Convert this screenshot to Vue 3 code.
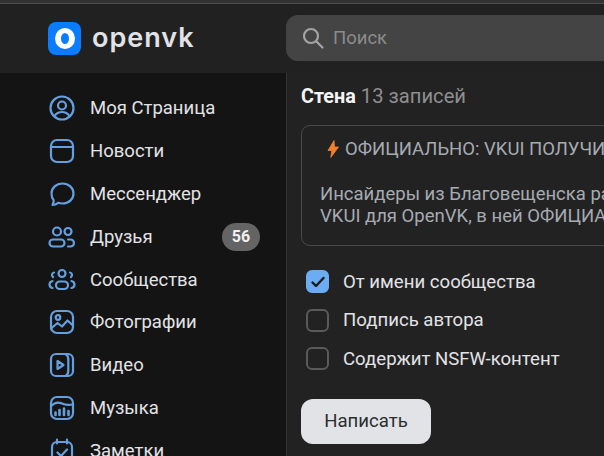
<script setup>
const navItems = [
  { label: 'Моя Страница', icon: 'user' },
  { label: 'Новости', icon: 'news' },
  { label: 'Мессенджер', icon: 'chat' },
  { label: 'Друзья', icon: 'friends', badge: 56 },
  { label: 'Сообщества', icon: 'groups' },
  { label: 'Фотографии', icon: 'photo' },
  { label: 'Видео', icon: 'video' },
  { label: 'Музыка', icon: 'music' },
  { label: 'Заметки', icon: 'notes' }
]

const options = [
  { label: 'От имени сообщества', checked: true },
  { label: 'Подпись автора', checked: false },
  { label: 'Содержит NSFW-контент', checked: false }
]
</script>

<template>
  <div class="page">
    <header class="header">
      <div class="brand">
        <div class="logo"><span class="logo-o"></span></div>
        <span class="brand-name">openvk</span>
      </div>
      <div class="search">
        <svg class="search-icon" width="24" height="24" viewBox="0 0 24 24" fill="none" stroke="#a4a4a4" stroke-width="2.2" stroke-linecap="round">
          <circle cx="10" cy="10" r="7" />
          <path d="M15.5 15.5 21.5 21.5" />
        </svg>
        <span>Поиск</span>
      </div>
    </header>

    <div class="body">
      <nav class="sidebar">
        <a v-for="item in navItems" :key="item.label" class="nav-item">
          <svg class="nav-icon" width="28" height="28" viewBox="0 0 28 28" fill="none" stroke="#649fe0" stroke-width="2.2" stroke-linecap="round" stroke-linejoin="round">
            <template v-if="item.icon === 'user'">
              <circle cx="14" cy="14" r="11.5" />
              <circle cx="14" cy="11.5" r="4" />
              <path d="M6.5 22c2-3 4.500-4 7.500-4s5.500 1 7.500 4" />
            </template>
            <template v-else-if="item.icon === 'news'">
              <rect x="3" y="3" width="22" height="22" rx="6" />
              <path d="M3 10h22" />
            </template>
            <template v-else-if="item.icon === 'chat'">
              <path d="M14.500 3.500c6.200 0 11 4.300 11 10s-4.800 10-11 10c-1.500 0-3-.2-4.300-.7-1.500 1.300-3.700 2.200-5.700 2.200.9-1.500 1.300-3 1.200-4.700C4 18.500 3.500 16.200 3.500 13.500c0-5.700 4.800-10 11-10Z" />
            </template>
            <template v-else-if="item.icon === 'friends'">
              <circle cx="9" cy="8.500" r="4" />
              <circle cx="20" cy="8.500" r="3.500" />
              <rect x="1.500" y="16.500" width="15" height="7" rx="3.500" />
              <path d="M20 16.500h2.500a3.500 3.500 0 0 1 0 7H20" />
            </template>
            <template v-else-if="item.icon === 'groups'">
              <circle cx="14" cy="7.500" r="3.500" />
              <rect x="8" y="15.500" width="12" height="7.500" rx="3.750" />
              <path d="M6 6.500a2.500 2.500 0 0 0-1 4.500M22 6.500a2.500 2.500 0 0 1 1 4.500M4.500 15c-2 .5-3 2-3 3.500s1 3 3 3.500M23.500 15c2 .5 3 2 3 3.500s-1 3-3 3.500" />
            </template>
            <template v-else-if="item.icon === 'photo'">
              <rect x="3" y="3" width="22" height="22" rx="6" />
              <circle cx="10" cy="9.500" r="2.300" />
              <path d="M3 20.500 9.500 15l4.500 3.500 5.500-6 5.500 5" />
            </template>
            <template v-else-if="item.icon === 'video'">
              <rect x="3" y="3" width="22" height="22" rx="5" />
              <path d="M18 3.500c1.800 1 2.300 2.500 2.300 5v11c0 2.500-.5 4-2.300 5" />
              <path d="M9.500 10v8l6-4Z" />
            </template>
            <template v-else-if="item.icon === 'music'">
              <rect x="3" y="3" width="22" height="22" rx="6" />
              <path d="M3 12c3.500-3.500 7-4.500 11-2.500s7.500 1.500 11 1" />
              <path d="M7.500 18.500v2.500M11.500 16v5M16 14.500V21M20.500 17v4" stroke-width="2.600" />
            </template>
            <template v-else>
              <rect x="4" y="5" width="20" height="20" rx="5" />
              <path d="M9 2.500v4M19 2.500v4M9.500 15.500l3.500 3.500 6-6.500" />
            </template>
          </svg>
          <span class="nav-label">{{ item.label }}</span>
          <span v-if="item.badge" class="badge">{{ item.badge }}</span>
        </a>
      </nav>

      <main class="main">
        <div class="wall-title"><b>Стена</b> <span>13 записей</span></div>

        <div class="post">
          <div class="post-title">
            <svg class="bolt" width="14" height="20" viewBox="0 0 14 20"><path d="M8 1.500 2 11.500h3.800L4.800 18.500 12.500 8H8.500Z" fill="#f0802c" stroke="#f0802c" stroke-width="0.800" stroke-linejoin="round" /></svg>
            <span>ОФИЦИАЛЬНО: VKUI ПОЛУЧИЛ ТЁМНУЮ</span>
          </div>
          <p class="post-text">Инсайдеры из Благовещенска рассказали<br>VKUI для OpenVK, в ней ОФИЦИАЛЬНО</p>
        </div>

        <label v-for="opt in options" :key="opt.label" class="option">
          <span class="box" :class="{ checked: opt.checked }">
            <svg v-if="opt.checked" width="16" height="14" viewBox="0 0 16 14" fill="none" stroke="#1b1b1b" stroke-width="2.400" stroke-linecap="round" stroke-linejoin="round"><path d="M2.500 7.500 6 11l7.500-8" /></svg>
          </span>
          <span>{{ opt.label }}</span>
        </label>

        <button class="submit">Написать</button>
      </main>
    </div>
  </div>
</template>

<style>
html, body {
  margin: 0;
  background: #222;
  overflow: hidden;
}
</style>

<style scoped>
.page {
  width: 604px;
  height: 456px;
  overflow: hidden;
  display: flex;
  flex-direction: column;
  font-family: Roboto, "Noto Sans", sans-serif;
  background: #222;
  border-top: 3px solid #333;
  box-sizing: border-box;
}

.header {
  height: 70px;
  flex-shrink: 0;
  display: flex;
  align-items: center;
  padding-bottom: 1px;
  background: #212121;
  border-top: 1px solid #4c4c4c;
  box-sizing: border-box;
}

.brand {
  width: 286px;
  flex-shrink: 0;
  padding-left: 48px;
  box-sizing: border-box;
  display: flex;
  align-items: center;
  gap: 11px;
}

.logo {
  width: 33px;
  height: 33px;
  border-radius: 8px;
  background: #0a7cff;
  display: flex;
  align-items: center;
  justify-content: center;
}

.logo-o {
  width: 8px;
  height: 11px;
  border-style: solid;
  border-color: #fff;
  border-width: 5px 6.5px;
  border-radius: 50%;
}

.brand-name {
  font-family: Inter, sans-serif;
  font-weight: 600;
  font-size: 27px;
  letter-spacing: 1px;
  color: #e2e3e7;
  margin-top: -1px;
}

.search {
  flex: 1;
  height: 46px;
  border-radius: 12px 0 0 12px;
  background: #444;
  display: flex;
  align-items: center;
  padding-left: 15px;
  gap: 8px;
  font-size: 18.5px;
  color: #8b8b8b;
}

.body {
  flex: 1;
  display: flex;
  min-height: 0;
}

.sidebar {
  width: 287px;
  flex-shrink: 0;
  box-sizing: border-box;
  background: #141414;
  border-right: 1px solid #333;
  padding: 14px 26px 0 48px;
}

.nav-item {
  height: 42.8px;
  display: flex;
  align-items: center;
  font-size: 18.5px;
  color: #e2e3e7;
}

.nav-icon {
  flex-shrink: 0;
  margin-right: 14px;
}

.nav-label {
  flex: 1;
}

.badge {
  width: 38px;
  height: 28px;
  border-radius: 14px;
  background: #646464;
  color: #f0f0f0;
  font-size: 16px;
  font-weight: 700;
  display: flex;
  align-items: center;
  justify-content: center;
}

.main {
  flex: 1;
  min-width: 0;
  padding: 9px 0 0 14px;
}

.wall-title {
  font-size: 20.2px;
  line-height: 28px;
  color: #8f8f8f;
  white-space: nowrap;
}

.wall-title b {
  color: #f4f4f4;
  font-weight: 700;
  font-size: 19.8px;
}

.post {
  margin-top: 14px;
  width: 400px;
  height: 121px;
  box-sizing: border-box;
  border: 1px solid #4a4a4a;
  border-radius: 9px;
  padding: 9px 0 0 18px;
  color: #a6abb2;
  font-size: 18.5px;
  white-space: nowrap;
}

.post-title {
  display: flex;
  align-items: center;
  gap: 5px;
  margin-left: 6px;
  height: 28px;
}

.bolt {
  flex-shrink: 0;
}

.post-text {
  margin: 20px 0 0;
  line-height: 22px;
}

.option {
  display: flex;
  align-items: center;
  height: 38.6px;
  padding-left: 5px;
  gap: 14px;
  font-size: 18.6px;
  color: #e2e3e7;
  white-space: nowrap;
}

.post + .option {
  margin-top: 16.5px;
}

.box {
  width: 23px;
  height: 23px;
  box-sizing: border-box;
  border: 2px solid #5a5a5a;
  border-radius: 6px;
  display: flex;
  align-items: center;
  justify-content: center;
}

.box.checked {
  background: #6cacf2;
  border-color: #6cacf2;
}

.submit {
  display: block;
  margin-top: 20.5px;
  width: 130px;
  height: 45px;
  border: none;
  border-radius: 12px;
  background: #e2e3e7;
  color: #2c2d2e;
  font-family: inherit;
  font-size: 18.6px;
}
</style>
